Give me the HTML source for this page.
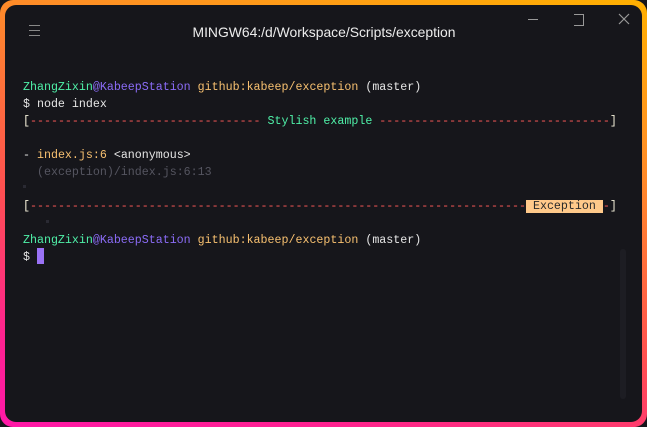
<!DOCTYPE html>
<html><head><meta charset="utf-8"><style>
html,body{margin:0;padding:0;background:#16161b;}
body{width:647px;height:427px;overflow:hidden;position:relative;}
.frame{position:absolute;left:0;top:0;width:647px;height:427px;border-radius:13px;background:linear-gradient(195deg,#ffb000 0%,#ff8a2a 30%,#ff5050 60%,#ff2290 85%,#ff18a8 100%);}
.win{position:absolute;left:5px;top:5px;width:637px;height:417px;border-radius:11px;background:#16161b;}
.title{position:absolute;left:0;width:648px;top:24px;text-align:center;font:13.9px "Liberation Sans",sans-serif;color:#ececec;}
.mono{position:absolute;left:23px;font:11.65px/17px "Liberation Mono",monospace;white-space:pre;color:#e6e6e6;}
.g{color:#4ff0a8}.p{color:#8b6cf7}.y{color:#f7c070}.r{color:#ff5a5a}.gr{color:#555560}.w{color:#f2eed8}
.exc{background:#ffc98a;color:#2a2a2a;}
</style></head><body>
<div class="frame"></div><div class="win"></div>
<div style="position:absolute;left:29px;top:25px;width:11px;height:1px;background:#888;box-shadow:0 5px 0 #888,0 10px 0 #888"></div>
<div class="title">MINGW64:/d/Workspace/Scripts/exception</div>
<div style="position:absolute;left:528px;top:19px;width:10px;height:1px;background:#999"></div>
<div style="position:absolute;left:574px;top:14px;width:9px;height:10px;border:1px solid #999;border-left:none"></div>
<svg style="position:absolute;left:618px;top:13px" width="12" height="12"><path d="M1 1L11 11M11 1L1 11" stroke="#999" stroke-width="1.2"/></svg>
<div class="mono" style="top:79px"><span class="g">ZhangZixin</span><span class="p">@KabeepStation</span> <span class="y">github:kabeep/exception</span> (master)
$ node index
<span class="w">[</span><span class="r">---------------------------------</span><span class="g"> Stylish example </span><span class="r">---------------------------------</span><span class="w">]</span>

- <span class="y">index.js:6</span> &lt;anonymous&gt;
  <span class="gr">(exception)/index.js:6:13</span>

<span class="w">[</span><span class="r">-----------------------------------------------------------------------</span><span class="exc"> Exception </span><span class="r">-</span><span class="w">]</span>

<span class="g">ZhangZixin</span><span class="p">@KabeepStation</span> <span class="y">github:kabeep/exception</span> (master)
$ </div>
<div style="position:absolute;left:37px;top:248px;width:7px;height:16px;background:#9a72f5"></div>
<div style="position:absolute;left:23px;top:185px;width:3px;height:3px;background:#2a2a33"></div>
<div style="position:absolute;left:46px;top:220px;width:3px;height:3px;background:#2a2a33"></div>
<div style="position:absolute;left:620px;top:249px;width:6px;height:150px;border-radius:3px;background:#1d1d23"></div>
</body></html>
